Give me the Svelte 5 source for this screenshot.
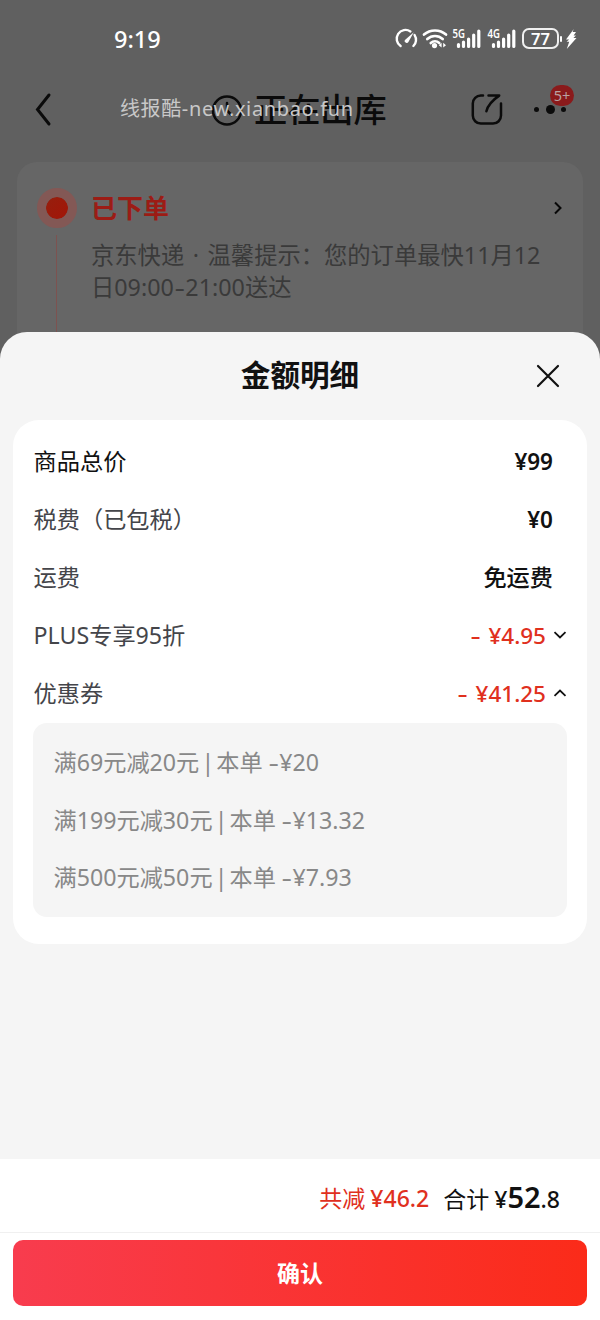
<script lang="ts">
  let plusOpen = $state(false)
  let couponOpen = $state(true)

  const coupons = [
    { rule: '满69元减20元', amount: '¥20' },
    { rule: '满199元减30元', amount: '¥13.32' },
    { rule: '满500元减50元', amount: '¥7.93' },
  ]
</script>

{#snippet signal(label: string)}
  <svg class="signal" width="30" height="24" viewBox="0 0 30 24">
    <text x="0.500" y="11" textLength="12.500" lengthAdjust="spacingAndGlyphs">{label}</text>
    <g stroke="#fff" stroke-width="3.2" stroke-linecap="round">
      <path d="M6.500 19.500v-2M11.500 19.500v-4.500M16.600 19.500V12M21.700 19.500V8M26.800 19.500V4" />
    </g>
  </svg>
{/snippet}

{#snippet chevron(open: boolean)}
  <svg class="chevron" width="14" height="10" viewBox="0 0 14 10">
    <path d={open ? 'M1.5 7.8 7 2.6l5.5 5.2' : 'M1.5 2.2 7 7.4l5.5-5.2'} />
  </svg>
{/snippet}

<div class="screen">
  <div class="status">
    <span class="time">9:19</span>
    <div class="indicators">
      <svg width="22" height="24" viewBox="0 0 22 24">
        <g fill="none" stroke="#fff" stroke-width="2.4" stroke-linecap="round">
          <path d="M4.600 19A8.600 8.600 0 0 1 14.400 4.400" />
          <path d="M18.600 8.100a8.600 8.600 0 0 1-1.200 10.900" />
        </g>
        <path d="M17.800 5.300 12.700 14.600a2 2 0 1 1-3.200-2.200z" fill="#fff" />
      </svg>
      <svg class="wifi" width="26" height="24" viewBox="0 0 26 24">
        <g fill="none" stroke="#fff" stroke-width="2.700" stroke-linecap="round">
          <path d="M2 7.600c6.200-5.500 15.800-5.500 22 0" />
          <path d="M5.300 12c4.400-4 11-4 15.400 0" />
          <path d="M8.800 16c2.500-2.200 5.900-2.200 8.400 0" />
        </g>
        <circle cx="12.500" cy="18.600" r="2.600" fill="#fff" />
        <path d="m19.600 15.800v4.800l-2.800-2.400zM21.200 15.800v4.800l2.800-2.400z" fill="#fff" />
      </svg>
      {@render signal('5G')}
      {@render signal('4G')}
      <span class="battery">77</span>
      <span class="battery-tip"></span>
      <svg width="12" height="22" viewBox="0 0 12 22">
        <path d="M8.800 1 1 11.500h3.200L1.600 13.800h2.600L1.800 21 11.500 10H8.400l2.600-2.400H8.600L11 4H7.600z" fill="#fff" />
      </svg>
    </div>
  </div>

  <header class="nav">
    <button class="back" aria-label="返回">
      <svg width="18" height="36" viewBox="0 0 18 36">
        <path d="M15 3 3.500 17.500 15 32" />
      </svg>
    </button>
    <h1>
      <svg width="32" height="32" viewBox="0 0 32 32">
        <circle cx="16" cy="16.500" r="14" />
        <path d="M16 9v7.500l4.500 4.500" />
      </svg>
      <span>正在出库</span>
    </h1>
    <div class="actions">
      <svg width="32" height="32" viewBox="0 0 32 32">
        <path d="M12 1.600H9.800a8 8 0 0 0-8 8v12a8 8 0 0 0 8 8H22a8 8 0 0 0 8-8V9.500" />
        <path d="M17.500 1.600H28.200C21 6.500 16.800 11 15.400 17.300" stroke-linejoin="round" />
      </svg>
      <div class="more">
        <i></i><i class="big"></i><i></i>
        <span class="badge">5+</span>
      </div>
    </div>
    <span class="watermark">线报酷-new.xianbao.fun</span>
  </header>

  <section class="order">
    <div class="track">
      <span class="dot"></span>
      <span class="line"></span>
    </div>
    <div class="order-body">
      <div class="order-head">
        <h2>已下单</h2>
        <svg width="10" height="16" viewBox="0 0 10 16"><path d="m2 2.500 5.500 5.500L2 13.500" /></svg>
      </div>
      <p>京东快递 · 温馨提示：您的订单最快11月12<br />日09:00<i class="dash">-</i>21:00送达</p>
    </div>
  </section>

  <div class="sheet">
    <div class="sheet-head">
      <h3>金额明细</h3>
      <button class="close" aria-label="关闭">
        <svg width="24" height="24" viewBox="0 0 24 24"><path d="m2 2 20 20M22 2 2 22" /></svg>
      </button>
    </div>

    <div class="card">
      <div class="row">
        <span class="strong">商品总价</span>
        <b>¥99</b>
      </div>
      <div class="row">
        <span>税费（已包税）</span>
        <b>¥0</b>
      </div>
      <div class="row">
        <span>运费</span>
        <b class="free">免运费</b>
      </div>
      <button class="row toggle" onclick={() => (plusOpen = !plusOpen)}>
        <span>PLUS专享95折</span>
        <b class="off"><i class="dash">-</i>¥4.95</b>
        {@render chevron(plusOpen)}
      </button>
      <button class="row toggle" onclick={() => (couponOpen = !couponOpen)}>
        <span>优惠券</span>
        <b class="off"><i class="dash">-</i>¥41.25</b>
        {@render chevron(couponOpen)}
      </button>
      {#if couponOpen}
        <ul class="coupons">
          {#each coupons as coupon}
            <li>{coupon.rule}<i class="bar">|</i>本单 <i class="dash">-</i>{coupon.amount}</li>
          {/each}
        </ul>
      {/if}
    </div>

    <footer>
      <div class="total">
        <span class="saved">共减<b>¥46.2</b></span>
        <span class="sum">合计<b>¥<em>52</em>.8</b></span>
      </div>
      <div class="confirm-bar">
        <button class="confirm">确认</button>
      </div>
    </footer>
  </div>
</div>

<style>
  :global(body) {
    background: #606060;
  }
  .screen {
    display: flex;
    flex-direction: column;
    height: 1320px;
    overflow: hidden;
    background: #606060;
    color: #111;
    font-family: 'Noto Sans', 'Noto Sans CJK SC', sans-serif;
    font-size: 23px;
  }
  h1,
  h2,
  h3,
  p,
  ul {
    margin: 0;
    padding: 0;
    font-weight: 400;
  }
  i,
  em {
    font-style: normal;
  }
  svg {
    display: block;
    flex-shrink: 0;
  }
  button {
    padding: 0;
    border: none;
    background: none;
    color: inherit;
    font: inherit;
    cursor: pointer;
  }
  /* hyphen stretched to the width of a minus sign */
  .dash {
    display: inline-block;
    margin: 0 2px;
    transform: scaleX(1.4);
  }

  .status {
    display: flex;
    align-items: center;
    justify-content: space-between;
    box-sizing: border-box;
    height: 77px;
    padding: 0 23px 0 114px;
    color: #fff;
  }
  .time {
    font-size: 23.500px;
    font-weight: 500;
  }
  .indicators {
    display: flex;
    align-items: center;
  }
  .indicators svg {
    overflow: visible;
  }
  .wifi {
    margin: 0 4px 0 4px;
  }
  .signal {
    margin-right: 5px;
  }
  .signal text {
    fill: #fff;
    font-size: 12.500px;
    font-weight: 600;
  }
  .battery {
    box-sizing: border-box;
    width: 37px;
    height: 21px;
    border: 2px solid #f0f0f0;
    border-radius: 7px;
    font-size: 16.500px;
    font-weight: 600;
    line-height: 17px;
    text-align: center;
  }
  .battery-tip {
    width: 2px;
    height: 6px;
    margin: 0 3px 0 1px;
    border-radius: 1px;
    background: #fff;
  }

  .nav {
    position: relative;
    display: flex;
    align-items: center;
    box-sizing: border-box;
    height: 65px;
    margin-bottom: 20px;
    padding: 0 34px 0 34px;
  }
  .nav svg {
    fill: none;
    stroke: #0b0b0b;
    stroke-width: 2.500;
    stroke-linecap: round;
  }
  .nav .back svg {
    stroke-width: 3;
  }
  h1 {
    display: flex;
    flex: 1;
    align-items: center;
    gap: 11px;
    margin-left: 159px;
    color: #0b0b0b;
    font-size: 33.200px;
    font-weight: 500;
    white-space: nowrap;
  }
  h1 span {
    padding-bottom: 4px;
  }
  .actions {
    display: flex;
    align-items: center;
    gap: 31px;
  }
  .more {
    position: relative;
    display: flex;
    align-items: center;
    justify-content: space-between;
    width: 32px;
  }
  .more i {
    width: 5px;
    height: 5px;
    border-radius: 50%;
    background: #0b0b0b;
  }
  .more .big {
    width: 9px;
    height: 9px;
  }
  .badge {
    position: absolute;
    top: -20px;
    left: 16px;
    width: 24px;
    height: 21px;
    border-radius: 11px;
    background: #8a1a1b;
    color: #b9a2a2;
    font-size: 14.500px;
    line-height: 20px;
    text-align: center;
  }
  .watermark {
    position: absolute;
    top: 18px;
    left: 120px;
    color: #c8c8c8;
    font-size: 20px;
    line-height: 28px;
    letter-spacing: 0.620px;
    white-space: nowrap;
  }

  .order {
    display: flex;
    box-sizing: border-box;
    height: 190px;
    margin: 0 17px;
    padding: 26px 0 0 19.500px;
    border-radius: 20px;
    background: #666;
  }
  .track {
    display: flex;
    flex-direction: column;
    align-items: center;
    width: 40px;
  }
  .dot {
    box-sizing: border-box;
    width: 40px;
    height: 40px;
    border: 9px solid #835855;
    border-radius: 50%;
    background: linear-gradient(135deg, #961f0e, #a31507) padding-box;
  }
  .line {
    width: 1px;
    flex: 1;
    margin-top: 7px;
    background: #7d5250;
  }
  .order-body {
    flex: 1;
    padding: 0 20px 0 14.500px;
  }
  .order-head {
    display: flex;
    align-items: center;
    justify-content: space-between;
    height: 39px;
  }
  .order-head svg {
    fill: none;
    stroke: #080808;
    stroke-width: 2;
  }
  h2 {
    padding-bottom: 1px;
    color: #9c1c15;
    font-size: 26px;
    font-weight: 700;
  }
  p {
    margin-top: 12px;
    color: #3a3a3a;
    font-size: 23.300px;
    line-height: 32px;
    white-space: nowrap;
    word-spacing: 2.500px;
  }

  .sheet {
    position: relative;
    display: flex;
    flex: 1;
    flex-direction: column;
    margin-top: -20px;
    border-radius: 27px 27px 0 0;
    background: #f5f5f5;
  }
  .sheet-head {
    position: relative;
    height: 88px;
    text-align: center;
  }
  h3 {
    font-size: 29.600px;
    font-weight: 700;
    line-height: 86px;
  }
  .close {
    position: absolute;
    top: 32px;
    right: 40px;
  }
  .close svg {
    fill: none;
    stroke: #111;
    stroke-width: 2.200;
    stroke-linecap: round;
  }
  .card {
    margin: 0 13px;
    padding: 12px 20px 27px;
    border-radius: 26px;
    background: #fff;
  }
  .row {
    display: flex;
    align-items: center;
    width: 100%;
    height: 58px;
    box-sizing: border-box;
    padding: 0 14px 0 0.600px;
    color: #44454a;
    font-size: 23.200px;
    line-height: 34px;
    text-align: left;
  }
  .row span {
    flex: 1;
  }
  .row b {
    padding-top: 1px;
    color: #111;
    font-size: 22.500px;
    font-weight: 600;
  }
  .row .strong {
    color: #111;
  }
  .row .free {
    padding: 0;
    font-size: 23.200px;
    font-weight: 500;
  }
  .toggle {
    padding-right: 0;
  }
  .row .off {
    color: #e0301e;
    font-weight: 500;
  }
  .off .dash {
    margin-right: 9px;
  }
  .chevron {
    margin-left: 7px;
    fill: none;
    stroke: #111;
    stroke-width: 1.800;
  }
  .coupons {
    margin-top: 1px;
    padding: 11px 20.500px 10.500px;
    border-radius: 14px;
    background: #f5f5f5;
    color: #888;
    font-size: 23.200px;
    list-style: none;
  }
  .coupons li {
    height: 57.500px;
    line-height: 57.500px;
  }
  .coupons .dash {
    margin: 0 1.500px;
  }
  .bar {
    display: inline-block;
    width: 17px;
    text-align: center;
  }

  footer {
    margin-top: auto;
    background: #fff;
  }
  .total {
    display: flex;
    align-items: center;
    justify-content: flex-end;
    gap: 14px;
    box-sizing: border-box;
    height: 73px;
    padding: 4px 40px 0;
    line-height: 40px;
  }
  .total b {
    margin-left: 5px;
    font-size: 23px;
    font-weight: 500;
  }
  .total em {
    font-size: 29px;
    font-weight: 600;
  }
  .saved {
    color: #e0301e;
  }
  .confirm-bar {
    padding: 7px 13px 14px;
    border-top: 1px solid #f0f0f0;
  }
  .confirm {
    display: block;
    width: 100%;
    height: 66px;
    padding-bottom: 2px;
    border-radius: 10px;
    background: linear-gradient(90deg, #f83c4e, #fb2b19);
    color: #fff;
    font-weight: 700;
  }
</style>
